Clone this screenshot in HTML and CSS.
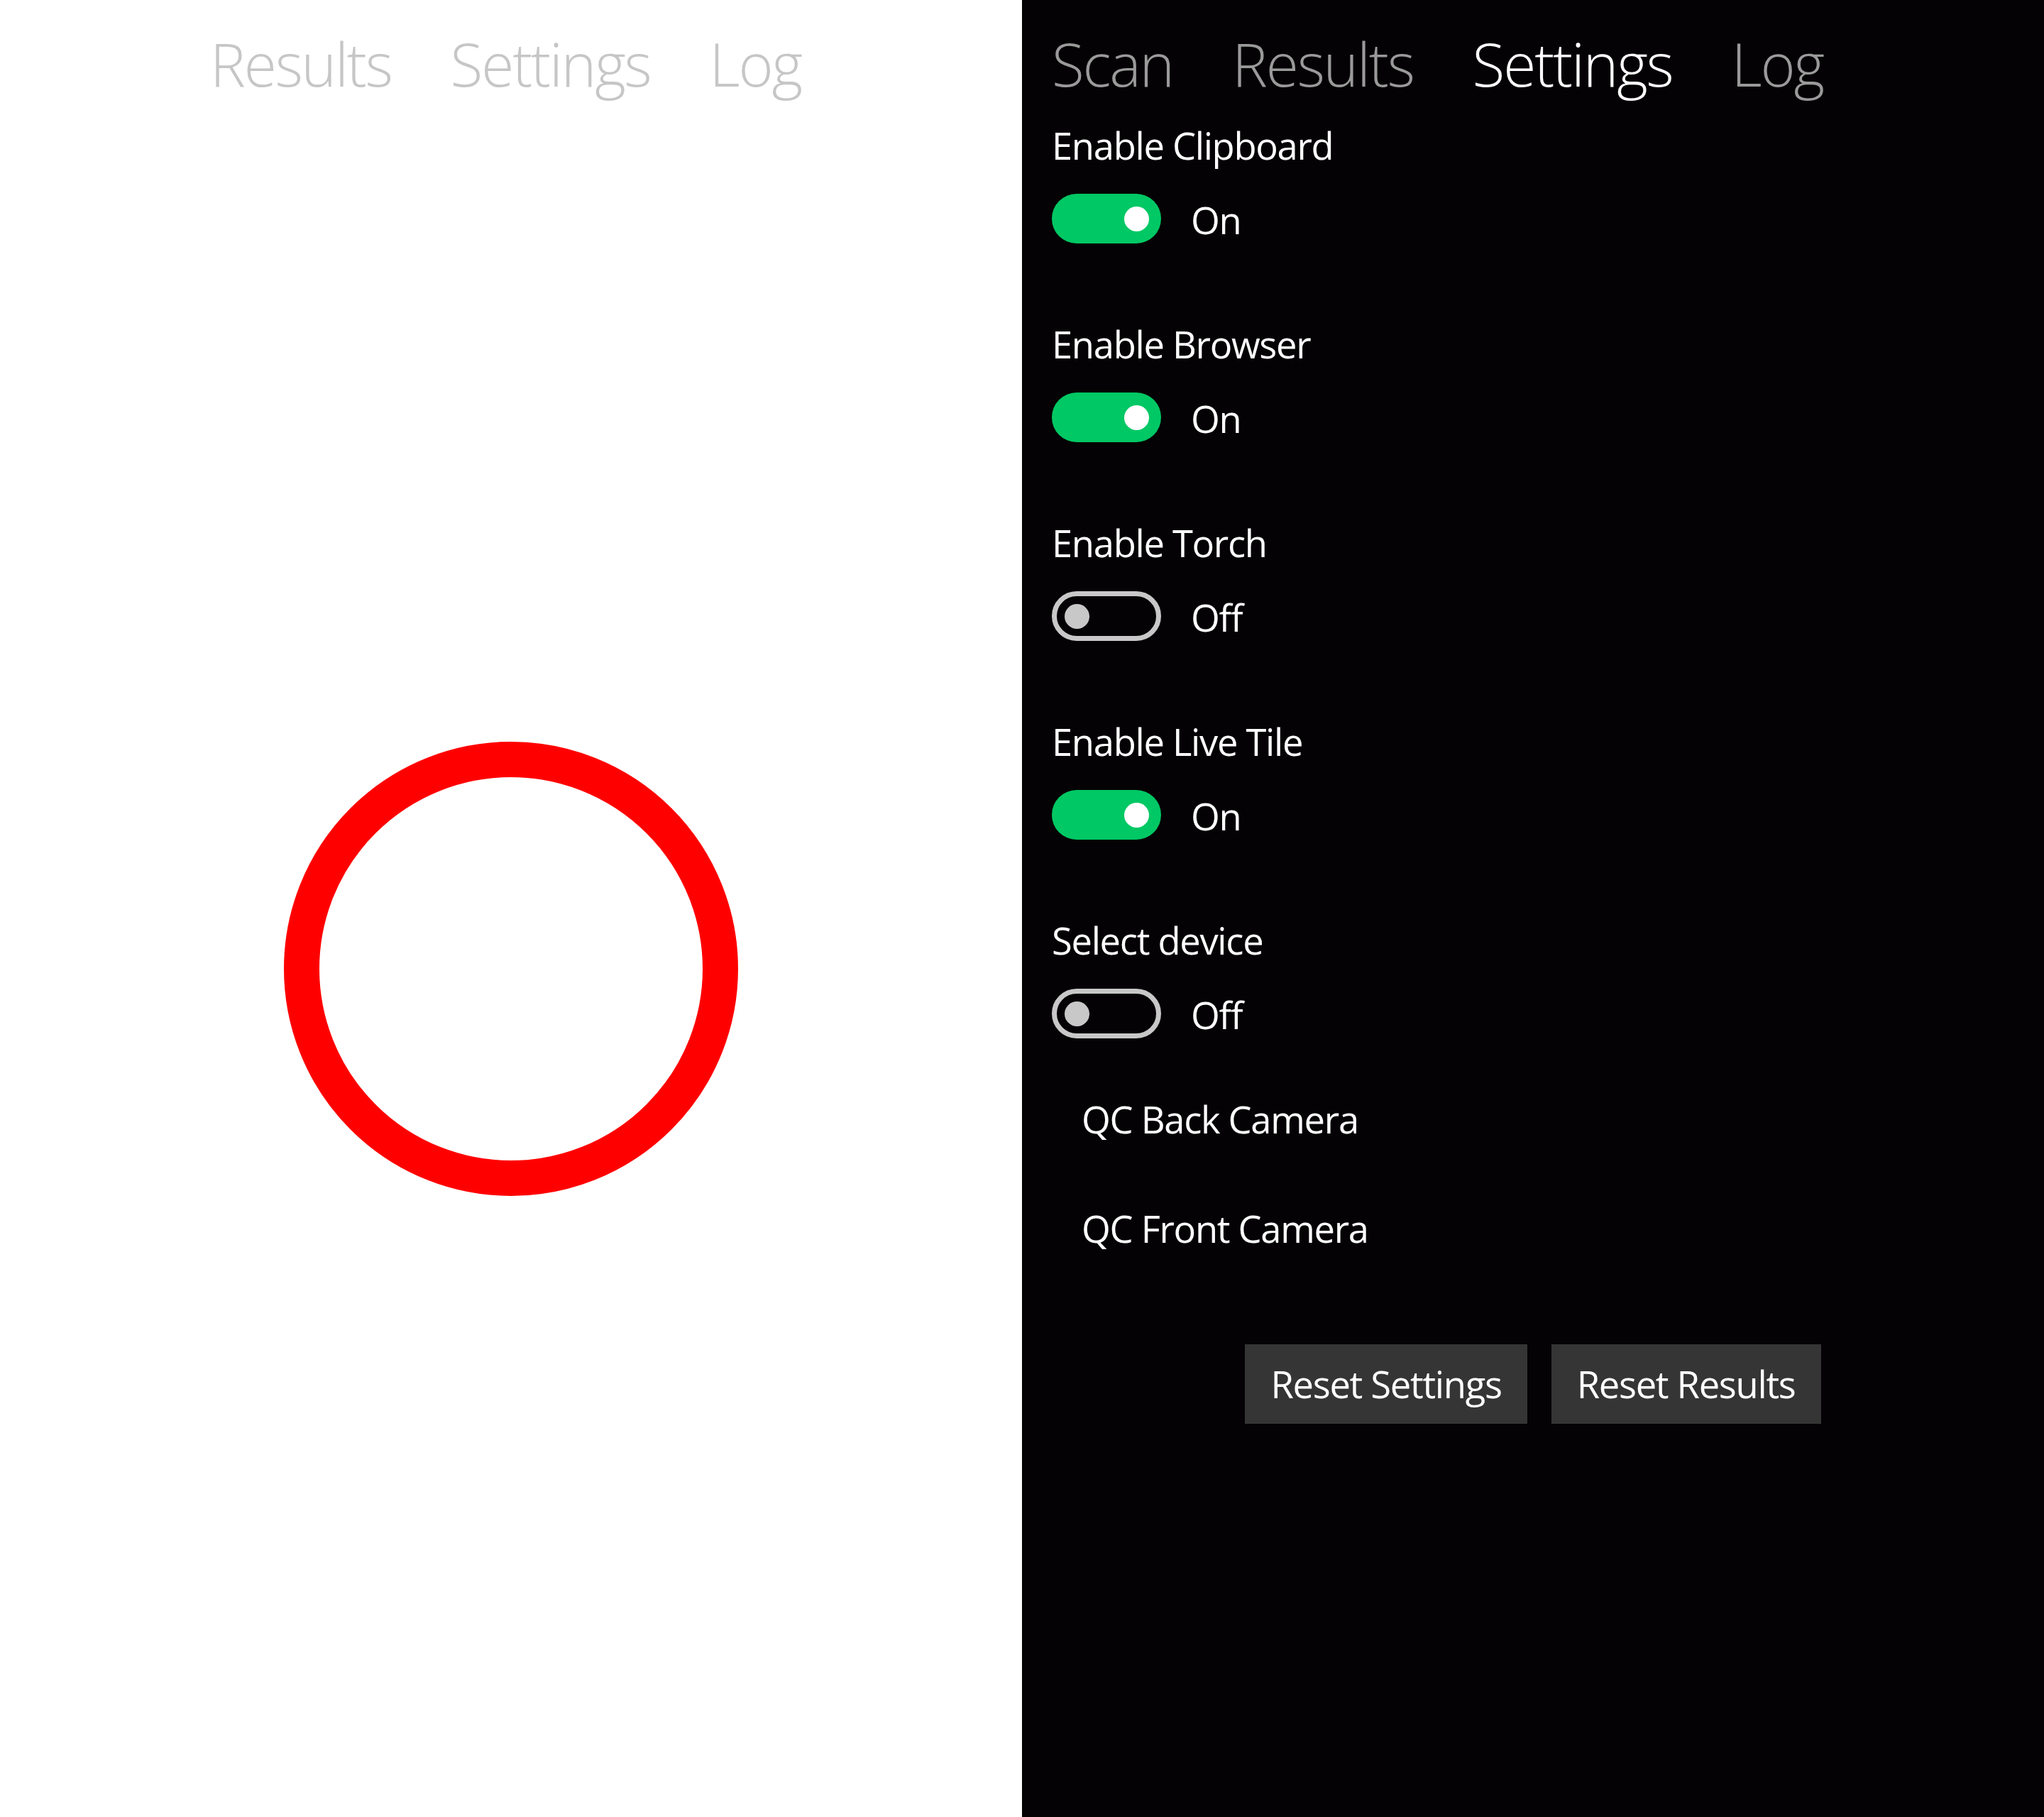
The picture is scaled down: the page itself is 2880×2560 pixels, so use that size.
FILE: index.html
```html
<!DOCTYPE html>
<html lang="en">
<head>
<meta charset="utf-8">
<title>Scanner settings</title>
<link rel="stylesheet" href="styles.css">
</head>
<body>
<div class="screen">
  <section class="panel panel-light">
    <nav class="pivot">
      <span class="pivot-item pivot-selected">Scan</span>
      <span class="pivot-item">Results</span>
      <span class="pivot-item">Settings</span>
      <span class="pivot-item">Log</span>
    </nav>
    <div class="scan-area">
      <div class="ring"></div>
    </div>
  </section>
  <section class="panel panel-dark">
    <nav class="pivot">
      <span class="pivot-item">Scan</span>
      <span class="pivot-item">Results</span>
      <span class="pivot-item pivot-selected">Settings</span>
      <span class="pivot-item">Log</span>
    </nav>
    <div class="settings">
      <div class="setting">
        <div class="setting-label">Enable Clipboard</div>
        <div class="toggle-row"><span class="toggle on"><span class="thumb"></span></span><span class="toggle-text">On</span></div>
      </div>
      <div class="setting">
        <div class="setting-label">Enable Browser</div>
        <div class="toggle-row"><span class="toggle on"><span class="thumb"></span></span><span class="toggle-text">On</span></div>
      </div>
      <div class="setting">
        <div class="setting-label">Enable Torch</div>
        <div class="toggle-row"><span class="toggle off"><span class="thumb"></span></span><span class="toggle-text">Off</span></div>
      </div>
      <div class="setting">
        <div class="setting-label">Enable Live Tile</div>
        <div class="toggle-row"><span class="toggle on"><span class="thumb"></span></span><span class="toggle-text">On</span></div>
      </div>
      <div class="setting last">
        <div class="setting-label">Select device</div>
        <div class="toggle-row"><span class="toggle off"><span class="thumb"></span></span><span class="toggle-text">Off</span></div>
      </div>
      <ul class="device-list">
        <li class="device">QC Back Camera</li>
        <li class="device">QC Front Camera</li>
      </ul>
      <div class="actions">
        <button class="btn">Reset Settings</button>
        <button class="btn">Reset Results</button>
      </div>
    </div>
  </section>
</div>
</body>
</html>
```
FILE: styles.css
```css
html, body {
  margin: 0;
  padding: 0;
}
body {
  width: 2880px;
  height: 2560px;
  font-family: "Open Sans", "Noto Sans", sans-serif;
  overflow: hidden;
}
.screen {
  display: grid;
  grid-template-columns: 1440px 1440px;
  height: 2560px;
}
.panel {
  display: flex;
  flex-direction: column;
  padding: 0 42px;
}
.panel-light {
  background: #ffffff;
}
.panel-dark {
  background: #040204;
  color: #ffffff;
}
.pivot {
  display: flex;
  gap: 83px;
  height: 170px;
  box-sizing: border-box;
  padding-top: 33px;
  font-size: 84px;
  font-weight: 300;
  line-height: 114px;
  letter-spacing: -2.2px;
  white-space: nowrap;
}
.panel-light .pivot-item {
  color: #c6c6c6;
}
.panel-light .pivot-selected {
  color: #ffffff;
}
.panel-dark .pivot-item {
  color: #9a9a9a;
}
.panel-dark .pivot-selected {
  color: #ffffff;
}
.scan-area {
  flex: 1;
  display: flex;
  align-items: center;
  justify-content: center;
}
.ring {
  width: 640px;
  height: 640px;
  box-sizing: border-box;
  border: 50px solid #ff0000;
  border-radius: 50%;
}
.settings {
  display: flex;
  flex-direction: column;
  font-size: 52.5px;
  letter-spacing: -1.3px;
}
.setting {
  height: 280px;
}
.setting.last {
  height: 210px;
}
.setting-label {
  line-height: 70px;
}
.toggle-row {
  display: flex;
  align-items: center;
  gap: 42px;
  margin-top: 33px;
  height: 70px;
}
.toggle {
  position: relative;
  width: 154px;
  height: 70px;
  box-sizing: border-box;
  border-radius: 35px;
  display: block;
}
.toggle.on {
  background: #00c864;
}
.toggle.off {
  border: 7px solid #c8c8c8;
}
.thumb {
  position: absolute;
  width: 35px;
  height: 35px;
  border-radius: 50%;
  top: 50%;
  margin-top: -17.5px;
}
.toggle.on .thumb {
  background: #ffffff;
  right: 17px;
}
.toggle.off .thumb {
  background: #c8c8c8;
  left: 11px;
}
.toggle-text {
  line-height: 70px;
  padding-top: 3px;
}
.device-list {
  list-style: none;
  margin: 0;
  padding: 0;
}
.device {
  height: 154px;
  line-height: 154px;
  padding-left: 42px;
}
.actions {
  display: flex;
  justify-content: center;
  gap: 34px;
  margin-top: 86px;
}
.btn {
  font-family: inherit;
  font-size: 52.5px;
  letter-spacing: -1.3px;
  color: #ffffff;
  background: #353535;
  border: none;
  height: 112px;
  padding: 0 36px;
  line-height: 112px;
}
```
